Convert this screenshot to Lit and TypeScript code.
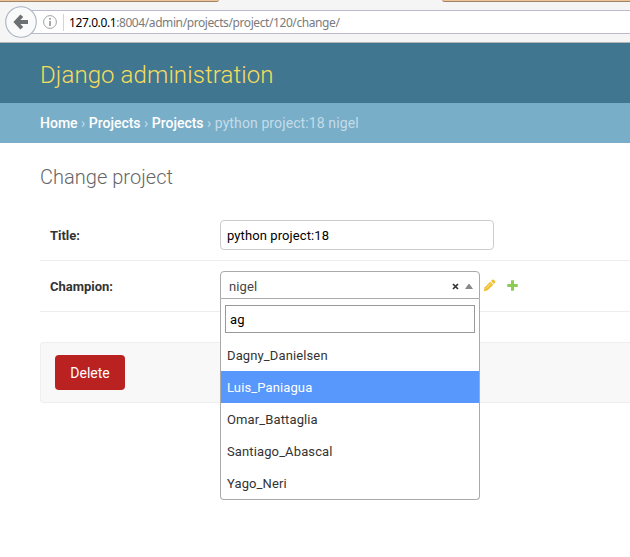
import { LitElement, html, css } from "lit";
import { customElement, property } from "lit/decorators.js";
import { classMap } from "lit/directives/class-map.js";

@customElement("browser-bar")
class BrowserBar extends LitElement {
  static styles = css`
    :host { display: flex; flex-direction: column; height: 43px; box-sizing: border-box; background: #f5f5f5; border-bottom: 1px solid #b5b5b5; overflow: hidden; }
    .tabs { display: flex; justify-content: space-between; height: 2px; }
    .tab { height: 2px; box-sizing: border-box; background: #edc397; border-bottom: 1px solid #a08468; }
    .left { width: 219px; border-bottom-right-radius: 4px 2px; }
    .right { width: 188px; border-bottom-left-radius: 4px 2px; }
    .nav { display: flex; align-items: center; height: 40px; }
    .back { flex: none; width: 32px; height: 32px; margin-left: 5px; z-index: 1; }
    .address { flex: 1; display: flex; align-items: center; height: 24px; box-sizing: border-box; margin-left: -8px; padding-left: 14px; background: #fff; border: solid #b9bacb; border-width: 1px 0; }
    .info { flex: none; width: 14px; height: 14px; }
    .rule { width: 1px; height: 17px; background: #d4d4d4; margin: 0 5px 0 6px; }
    .url { padding-top: 2px; font: 12px/20px "Noto Sans", sans-serif; color: #7b7b7b; letter-spacing: -0.41px; white-space: pre; }
    .host { color: #000; }
  `;
  render() {
    return html`
      <div class="tabs"><div class="tab left"></div><div class="tab right"></div></div>
      <div class="nav">
        <svg class="back" viewBox="0 0 32 32">
          <circle cx="16" cy="16" r="15.3" fill="#fafafa" stroke="#a9b2c2" stroke-width="1.1" />
          <path d="M16.8 9.8 L11 16 L16.8 22.2 M11.5 16 H23" fill="none" stroke="#6d7073" stroke-width="3.8" />
        </svg>
        <div class="address">
          <svg class="info" viewBox="0 0 14 14">
            <circle cx="7" cy="7" r="6.4" fill="none" stroke="#a3a3a3" />
            <path d="M7 3v1.8M7 6v5" stroke="#8b8b8b" stroke-width="1.5" />
          </svg>
          <div class="rule"></div>
          <div class="url"><span class="host">127.0.0.1</span>:8004/admin/projects/project/120/change/</div>
        </div>
      </div>`;
  }
}

@customElement("champion-select")
class ChampionSelect extends LitElement {
  @property() value = "nigel";
  @property() query = "ag";
  @property({ type: Number }) active = 1;
  @property({ attribute: false }) options = ["Dagny_Danielsen", "Luis_Paniagua", "Omar_Battaglia", "Santiago_Abascal", "Yago_Neri"];

  static styles = css`
    :host { display: block; position: relative; width: 260px; height: 28px; font: 13px/28px Roboto, sans-serif; }
    .box { display: flex; align-items: center; height: 28px; box-sizing: border-box; padding: 2px 6px 0 8px; background: #fff; border: 1px solid #aaa; border-bottom: 1px solid #aaa; border-radius: 4px 4px 0 0; color: #444; letter-spacing: 0.1px; }
    .value { flex: 1; padding-top: 1px; }
    .clear { width: 7px; height: 7px; margin-right: 6px; }
    .arrow { width: 8px; height: 5px; }
    .menu { position: absolute; top: 28px; left: 0; width: 260px; height: 201px; box-sizing: border-box; background: #fff; border: 1px solid #aaa; border-top: 0; border-radius: 0 0 4px 4px; }
    .search { height: 28px; box-sizing: border-box; margin: 6px 4px; padding: 0 4px; border: 1px solid #999; line-height: 28px; color: #000; letter-spacing: 0.1px; }
    .option { height: 32px; padding-left: 6px; line-height: 34px; color: #333; letter-spacing: 0.12px; }
    .active { background: #5897fb; color: #fff; }
  `;
  render() {
    return html`
      <div class="box">
        <span class="value">${this.value}</span>
        <svg class="clear" viewBox="0 0 7 7"><path d="M1 1 6 6M6 1 1 6" stroke="#333" stroke-width="1.7" /></svg>
        <svg class="arrow" viewBox="0 0 8 5"><path d="M0 5 3.5 0H4.5L8 5z" fill="#888" /></svg>
      </div>
      <div class="menu">
        <div class="search">${this.query}</div>
        ${this.options.map((name, i) => html`<div class=${classMap({ option: true, active: i === this.active })}>${name}</div>`)}
      </div>`;
  }
}

@customElement("app-root")
class AppRoot extends LitElement {
  static styles = css`
    :host { display: block; width: 630px; height: 557px; overflow: hidden; background: #fff; font: 13px/20px Roboto, sans-serif; color: #333; }
    .header { height: 60px; padding: 0 40px; background: #417690; color: #f5dd5d; font-size: 24px; font-weight: 300; line-height: 64px; letter-spacing: 0.1px; }
    .crumbs { height: 40px; padding: 0 40px; background: #79aec8; color: #c4dce8; font-size: 14px; line-height: 40px; white-space: pre; }
    .link { color: #fff; font-weight: 500; }
    .current { letter-spacing: 0.11px; }
    .content { padding: 20px 0 0 40px; }
    .title { height: 47px; font-size: 20px; font-weight: 300; line-height: 28px; letter-spacing: 0.03px; color: #666; }
    .row { display: flex; height: 51px; box-sizing: border-box; padding: 10px; border-bottom: 1px solid #eee; }
    .label { width: 170px; line-height: 31px; font-weight: 700; letter-spacing: -0.02px; }
    .input { width: 274px; height: 30px; box-sizing: border-box; padding: 0 6px; border: 1px solid #ccc; border-radius: 4px; line-height: 29px; color: #000; letter-spacing: 0.1px; }
    .icon { width: 13px; height: 13px; margin: 8px 0 0 3px; }
    .plus { margin-left: 10px; }
    .actions { height: 61px; box-sizing: border-box; margin-top: 30px; padding: 12px 14px; background: #f8f8f8; border: 1px solid #eee; border-right: 0; border-radius: 4px 0 0 4px; }
    .delete { width: 70px; height: 35px; border-radius: 4px; background: #ba2121; color: #fff; font-size: 14px; line-height: 36px; text-align: center; }
  `;
  render() {
    return html`
      <browser-bar></browser-bar>
      <div class="header">Django administration</div>
      <div class="crumbs"><span class="link">Home</span> › <span class="link">Projects</span> › <span class="link">Projects</span> › <span class="current">python project:18 nigel</span></div>
      <div class="content">
        <div class="title">Change project</div>
        <div class="row"><div class="label">Title:</div><div class="input">python project:18</div></div>
        <div class="row">
          <div class="label">Champion:</div>
          <champion-select></champion-select>
          <svg class="icon" viewBox="0 0 13 13">
            <path d="M.8 12.2 1.7 8.3 7.2 2.8 10.2 5.8 4.7 11.3z" fill="#f0be2e" />
            <path d="M7.9 2.1 9.2.8Q10 .2 10.9 1L12 2.1Q12.7 2.9 12.1 3.8L10.8 5.1z" fill="#f0be2e" />
            <path d="M3.2 9.2 7.6 4.8" stroke="#fbe9ae" stroke-width=".9" />
          </svg>
          <svg class="icon plus" viewBox="0 0 13 13"><path d="M5 1.3h3V5h3.7v3H8v3.7H5V8H1.3V5H5z" fill="#8ccc55" /></svg>
        </div>
        <div class="actions"><div class="delete">Delete</div></div>
      </div>`;
  }
}
